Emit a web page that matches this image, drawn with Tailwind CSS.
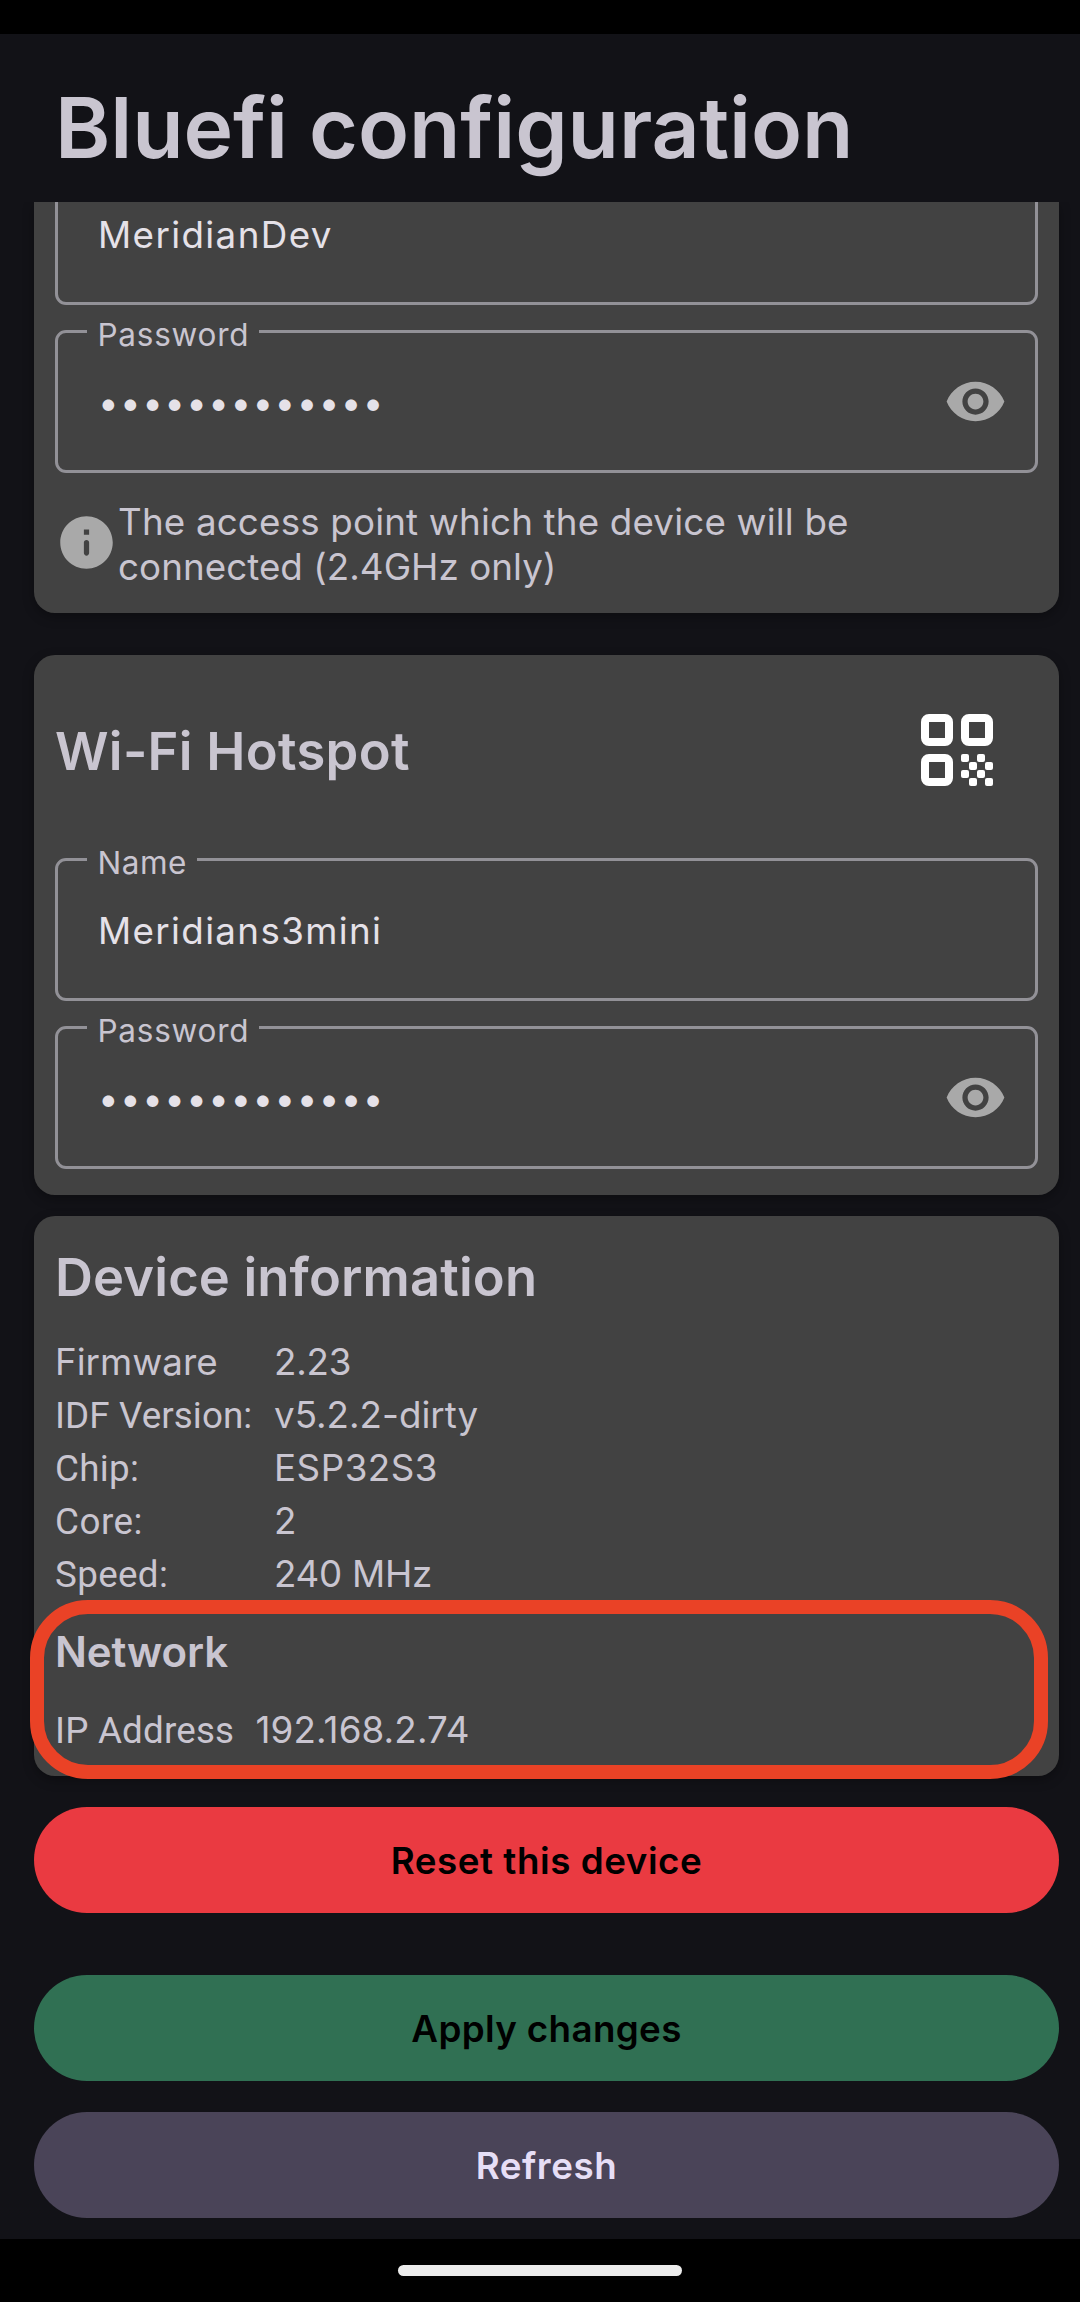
<!DOCTYPE html>
<html lang="en">
<head>
<meta charset="utf-8">
<title>Bluefi configuration</title>
<script src="https://cdn.jsdelivr.net/npm/@tailwindcss/browser@4"></script>
</head>
<body class="bg-[#121217] font-['Inter',sans-serif] text-[#c9c5d0]">
<div class="flex h-[2302px] w-[1080px] flex-col overflow-hidden">
  <div class="h-[34px] shrink-0 bg-black"></div>

  <header class="h-[168px] shrink-0 pt-[52px] pl-[55px]">
    <h1 class="text-[84px] leading-[84px] font-semibold tracking-[-0.1px]">Bluefi configuration</h1>
  </header>

  <main class="flex h-[2037px] shrink-0 flex-col overflow-hidden pr-[21px] pl-[34px]">
    <!-- Wi-Fi network -->
    <section class="h-[411px] shrink-0 rounded-b-[21px] bg-[#424242] px-[21px] shadow-[0_4px_12px_rgba(0,0,0,0.3)] [clip-path:inset(0_-21px_-21px_-21px)]">
      <div class="-mt-[40px] flex h-[143px] items-center rounded-[11px] border-[3px] border-[#929197] pt-[2px] pl-[40px]">
        <span class="text-[36.75px] leading-[48px] tracking-[1.38px] text-[#e5e1e8]">MeridianDev</span>
      </div>
      <div class="relative mt-[25px] flex h-[143px] items-center justify-between rounded-[11px] border-[3px] border-[#929197] pr-[28px] pl-[40px]">
        <span class="absolute -top-[14.5px] left-[29px] bg-[#424242] pr-[9.5px] pl-[10.5px] text-[31.5px] leading-[32px] tracking-[0.75px]">Password</span>
        <span class="pt-[2px] text-[36.75px] leading-[48px] tracking-[1.4px] text-[#e5e1e8]">•••••••••••••</span>
        <svg class="size-[63px] fill-[#a9a9a9]" viewBox="0 0 24 24"><path d="M12 4.5C7 4.5 2.73 7.61 1 12c1.73 4.39 6 7.5 11 7.5s9.27-3.11 11-7.5c-1.73-4.39-6-7.5-11-7.5zM12 17c-2.76 0-5-2.24-5-5s2.24-5 5-5 5 2.24 5 5-2.24 5-5 5zm0-8c-1.66 0-3 1.34-3 3s1.34 3 3 3 3-1.34 3-3-1.34-3-3-3z"/></svg>
      </div>
      <div class="mt-[26px] flex">
        <svg class="mt-[12px] size-[63px] shrink-0 fill-[#a9a9a9]" viewBox="0 0 24 24"><path d="M12 2C6.48 2 2 6.48 2 12s4.48 10 10 10 10-4.48 10-10S17.52 2 12 2zm0 15c-.55 0-1-.45-1-1v-4c0-.55.45-1 1-1s1 .45 1 1v4c0 .55-.45 1-1 1zm1-8h-2V7h2v2z"/></svg>
        <p class="text-[36.75px] leading-[45px] tracking-[0.17px]">The access point which the device will be<br><span class="tracking-[0.05px]">connected (2.4GHz only)</span></p>
      </div>
    </section>

    <!-- Hotspot -->
    <section class="mt-[42px] h-[540px] shrink-0 rounded-[21px] bg-[#424242] px-[21px] shadow-[0_4px_12px_rgba(0,0,0,0.3)]">
      <div class="flex h-[203px] items-center justify-between pr-[45.5px] pb-[13px]">
        <h2 class="pt-[2px] text-[52.5px] leading-[64px] font-semibold tracking-[0.3px]">Wi-Fi Hotspot</h2>
        <svg class="size-[72px] fill-white" viewBox="0 0 18 18">
          <path fill-rule="evenodd" d="M2 0h4a2 2 0 0 1 2 2v4a2 2 0 0 1-2 2H2a2 2 0 0 1-2-2V2a2 2 0 0 1 2-2zM2 2v4h4V2zM12 0h4a2 2 0 0 1 2 2v4a2 2 0 0 1-2 2h-4a2 2 0 0 1-2-2V2a2 2 0 0 1 2-2zM12 2v4h4V2zM2 10h4a2 2 0 0 1 2 2v4a2 2 0 0 1-2 2H2a2 2 0 0 1-2-2v-4a2 2 0 0 1 2-2zM2 12v4h4v-4z"/>
          <rect x="10" y="10" width="2" height="2" rx=".5"/><rect x="14" y="10" width="2" height="2" rx=".5"/>
          <rect x="12" y="12" width="2" height="2" rx=".5"/><rect x="16" y="12" width="2" height="2" rx=".5"/>
          <rect x="10" y="14" width="2" height="2" rx=".5"/><rect x="14" y="14" width="2" height="2" rx=".5"/>
          <rect x="12" y="16" width="2" height="2" rx=".5"/><rect x="16" y="16" width="2" height="2" rx=".5"/>
        </svg>
      </div>
      <div class="relative flex h-[143px] items-center rounded-[11px] border-[3px] border-[#929197] pt-[2px] pl-[40px]">
        <span class="absolute -top-[14.5px] left-[29px] bg-[#424242] pr-[10px] pl-[10.5px] text-[31.5px] leading-[32px] tracking-[0.5px]">Name</span>
        <span class="text-[36.75px] leading-[48px] tracking-[1.34px] text-[#e5e1e8]">Meridians3mini</span>
      </div>
      <div class="relative mt-[25px] flex h-[143px] items-center justify-between rounded-[11px] border-[3px] border-[#929197] pr-[28px] pl-[40px]">
        <span class="absolute -top-[14.5px] left-[29px] bg-[#424242] pr-[9.5px] pl-[10.5px] text-[31.5px] leading-[32px] tracking-[0.75px]">Password</span>
        <span class="pt-[2px] text-[36.75px] leading-[48px] tracking-[1.4px] text-[#e5e1e8]">•••••••••••••</span>
        <svg class="size-[63px] fill-[#a9a9a9]" viewBox="0 0 24 24"><path d="M12 4.5C7 4.5 2.73 7.61 1 12c1.73 4.39 6 7.5 11 7.5s9.27-3.11 11-7.5c-1.73-4.39-6-7.5-11-7.5zM12 17c-2.76 0-5-2.24-5-5s2.24-5 5-5 5 2.24 5 5-2.24 5-5 5zm0-8c-1.66 0-3 1.34-3 3s1.34 3 3 3 3-1.34 3-3-1.34-3-3-3z"/></svg>
      </div>
    </section>

    <!-- Device information -->
    <section class="relative mt-[21px] h-[560px] shrink-0 rounded-[21px] bg-[#424242] px-[21px] pt-[29px] shadow-[0_4px_12px_rgba(0,0,0,0.3)]">
      <h2 class="text-[52.5px] leading-[64px] font-semibold tracking-[0.15px]">Device information</h2>
      <dl class="mt-[26px] grid auto-rows-[53px] grid-cols-[219px_1fr] items-baseline text-[36.75px] leading-[53px]">
        <dt>Firmware</dt><dd class="tracking-[-0.2px]">2.23</dd>
        <dt class="font-['Roboto'] tracking-[0.1px]">IDF Version:</dt><dd>v5.2.2-dirty</dd>
        <dt class="font-['Roboto'] tracking-[0.3px]">Chip:</dt><dd class="tracking-[0.5px]">ESP32S3</dd>
        <dt class="font-['Roboto'] tracking-[0.5px]">Core:</dt><dd>2</dd>
        <dt class="font-['Roboto'] tracking-[0.35px]">Speed:</dt><dd class="tracking-[-0.25px]">240 MHz</dd>
      </dl>
      <h3 class="mt-[26px] text-[42px] leading-[52px] font-semibold tracking-[-0.1px]">Network</h3>
      <dl class="mt-[25px] grid auto-rows-[53px] grid-cols-[200.5px_1fr] items-baseline text-[36.75px] leading-[53px]">
        <dt class="font-['Roboto'] tracking-[0.2px]">IP Address</dt><dd class="tracking-[0.13px]">192.168.2.74</dd>
      </dl>
      <div class="absolute top-[384px] -left-[4px] h-[179px] w-[1018px] rounded-[58px] border-[14px] border-[#ea4226]"></div>
    </section>

    <button class="mt-[31px] h-[106px] shrink-0 rounded-full bg-[#ea3a41] pt-[2px] text-[36.75px] leading-[48px] font-[560] tracking-[0.55px] text-black">Reset this device</button>
    <button class="mt-[62px] h-[106px] shrink-0 rounded-full bg-[#307053] pt-[2px] text-[36.75px] leading-[48px] font-[560] tracking-[0.35px] text-black">Apply changes</button>
    <button class="mt-[31px] h-[106px] shrink-0 rounded-full bg-[#4a4458] pt-[2px] text-[36.75px] leading-[48px] font-semibold tracking-[0.55px] text-[#e6def6]">Refresh</button>
  </main>

  <footer class="flex h-[63px] shrink-0 justify-center bg-black pt-[26px]">
    <div class="h-[11px] w-[284px] rounded-full bg-[#ececec]"></div>
  </footer>
</div>
</body>
</html>
